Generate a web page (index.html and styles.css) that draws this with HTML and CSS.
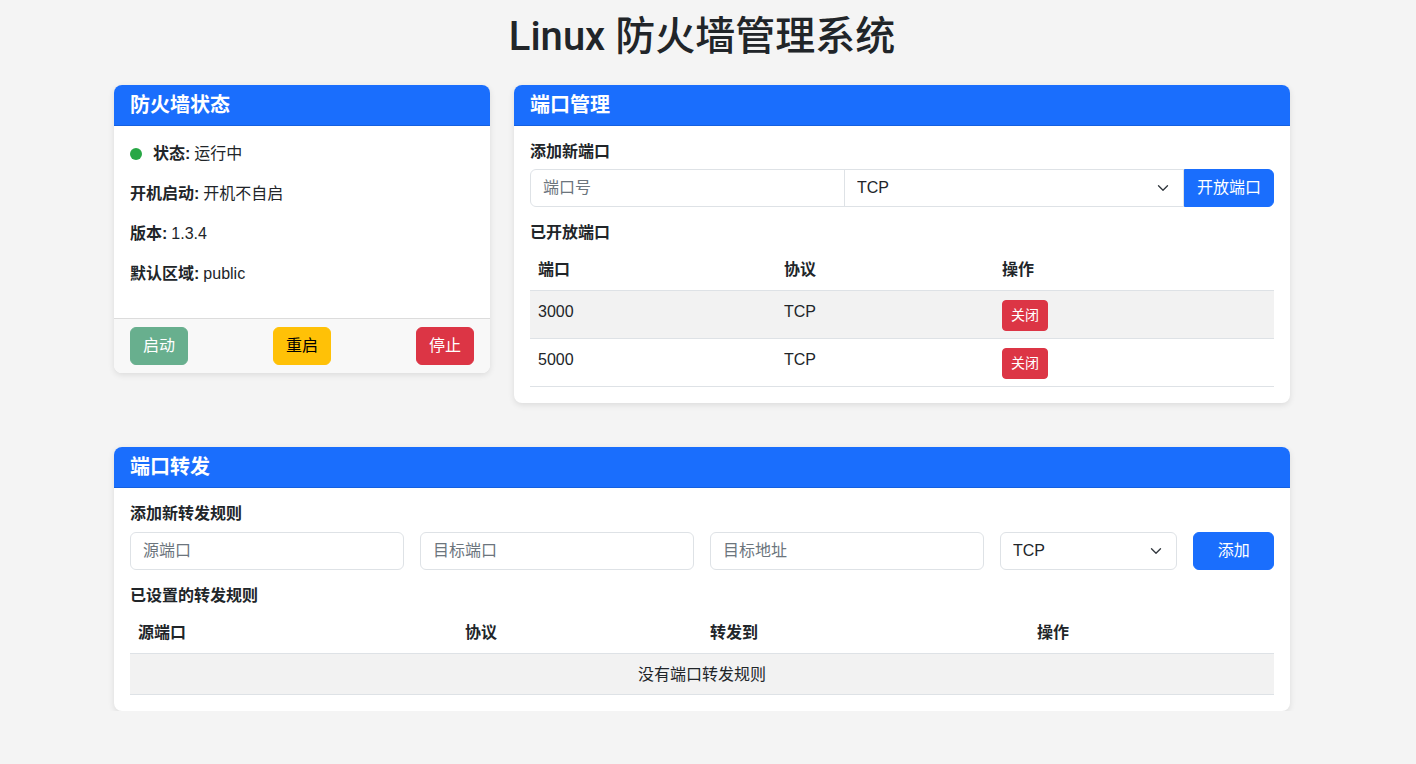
FILE: index.html
```html
<!DOCTYPE html>
<html lang="zh-CN">
<head>
<meta charset="utf-8">
<title>Linux 防火墙管理系统</title>
<link rel="stylesheet" href="styles.css">
</head>
<body>
<div class="container">
  <h1 class="page-title">Linux 防火墙管理系统</h1>

  <div class="top-row">
    <div class="card">
      <div class="card-header">防火墙状态</div>
      <div class="card-body">
        <p class="info"><span class="dot"></span><b>状态:</b> 运行中</p>
        <p class="info"><b>开机启动:</b> 开机不自启</p>
        <p class="info"><b>版本:</b> 1.3.4</p>
        <p class="info"><b>默认区域:</b> public</p>
      </div>
      <div class="card-footer">
        <button class="btn btn-success-disabled">启动</button>
        <button class="btn btn-warning">重启</button>
        <button class="btn btn-danger">停止</button>
      </div>
    </div>

    <div class="card">
      <div class="card-header">端口管理</div>
      <div class="card-body">
        <h6 class="section-title">添加新端口</h6>
        <div class="input-group">
          <input class="form-control ig-input" type="text" placeholder="端口号">
          <div class="select-wrap ig-select">
            <select class="form-select"><option>TCP</option><option>UDP</option></select>
            <svg class="chev" width="12" height="12" viewBox="0 0 16 16"><path d="M2 5l6 6 6-6" fill="none" stroke="#343a40" stroke-width="1.8" stroke-linecap="round" stroke-linejoin="round"/></svg>
          </div>
          <button class="btn btn-primary ig-btn">开放端口</button>
        </div>
        <h6 class="section-title gap-top">已开放端口</h6>
        <table class="table ports">
          <colgroup><col class="c1"><col class="c2"><col></colgroup>
          <thead><tr><th>端口</th><th>协议</th><th>操作</th></tr></thead>
          <tbody>
            <tr class="striped"><td>3000</td><td>TCP</td><td><button class="btn btn-sm btn-danger">关闭</button></td></tr>
            <tr><td>5000</td><td>TCP</td><td><button class="btn btn-sm btn-danger">关闭</button></td></tr>
          </tbody>
        </table>
      </div>
    </div>
  </div>

  <div class="card forward-card">
    <div class="card-header">端口转发</div>
    <div class="card-body">
      <h6 class="section-title">添加新转发规则</h6>
      <div class="fwd-form">
        <input class="form-control span3" type="text" placeholder="源端口">
        <input class="form-control span3" type="text" placeholder="目标端口">
        <input class="form-control span3" type="text" placeholder="目标地址">
        <div class="select-wrap span2">
          <select class="form-select full"><option>TCP</option><option>UDP</option></select>
          <svg class="chev" width="12" height="12" viewBox="0 0 16 16"><path d="M2 5l6 6 6-6" fill="none" stroke="#343a40" stroke-width="1.8" stroke-linecap="round" stroke-linejoin="round"/></svg>
        </div>
        <button class="btn btn-primary span1 rounded">添加</button>
      </div>
      <h6 class="section-title gap-top">已设置的转发规则</h6>
      <table class="table fwd">
        <colgroup><col class="f1"><col class="f2"><col class="f3"><col></colgroup>
        <thead><tr><th>源端口</th><th>协议</th><th>转发到</th><th>操作</th></tr></thead>
        <tbody>
          <tr class="striped"><td colspan="4" class="empty">没有端口转发规则</td></tr>
        </tbody>
      </table>
    </div>
  </div>
</div>
</body>
</html>
```

FILE: styles.css
```css
* { box-sizing: border-box; }

html, body {
  margin: 0;
  padding: 0;
}

body {
  background: #f4f4f4;
  color: #212529;
  font-family: "Liberation Sans", "Noto Sans CJK SC", sans-serif;
  font-size: 16px;
  line-height: 24px;
  padding-right: 12px;
}

.container {
  width: 1176px;
  margin: 0 auto;
}

.page-title {
  margin: 0 0 24px;
  padding-top: 13px;
  font-family: "Roboto", "Noto Sans CJK SC", sans-serif;
  font-size: 40px;
  line-height: 48px;
  font-weight: 500;
  text-align: center;
  color: #212529;
}

.top-row {
  display: grid;
  grid-template-columns: 376px 776px;
  gap: 24px;
  align-items: start;
}

.card {
  background: #fff;
  border-radius: 8px;
  box-shadow: 0 2px 6px rgba(0, 0, 0, 0.1);
  overflow: hidden;
}

.forward-card {
  margin-top: 44px;
}

.card-header {
  background: #1a6efd;
  color: #fff;
  font-size: 20px;
  font-weight: 700;
  line-height: 24px;
  padding: 8px 16px;
  border-bottom: 1px solid #1560df;
}

.card-body {
  padding: 16px;
}

.info {
  margin: 0 0 16px;
  display: flex;
  align-items: center;
}

.info b {
  font-weight: 700;
  margin-right: 4px;
}

.dot {
  width: 12px;
  height: 12px;
  border-radius: 50%;
  background: #28a745;
  margin-right: 11px;
}

.card-footer {
  display: flex;
  justify-content: space-between;
  padding: 8px 16px;
  background: #f8f8f8;
  border-top: 1px solid #dcdcdc;
}

.btn {
  font-family: inherit;
  font-size: 16px;
  line-height: 24px;
  padding: 6px 12px;
  border: 1px solid transparent;
  border-radius: 6px;
  cursor: pointer;
}

.btn-success-disabled {
  background: #68af8e;
  border-color: #68af8e;
  color: #fff;
}

.btn-warning {
  background: #ffc107;
  border-color: #ffc107;
  color: #000;
}

.btn-danger {
  background: #dc3545;
  border-color: #dc3545;
  color: #fff;
}

.btn-primary {
  background: #1a6efd;
  border-color: #1a6efd;
  color: #fff;
}

.btn-sm {
  font-size: 14px;
  line-height: 21px;
  padding: 4px 8px;
  border-radius: 4px;
}

.section-title {
  margin: 0 0 8px;
  font-size: 16px;
  line-height: 19px;
  font-weight: 700;
}

.gap-top {
  margin-top: 16px;
}

.form-control,
.form-select {
  font-family: inherit;
  font-size: 16px;
  line-height: 24px;
  color: #212529;
  padding: 6px 12px;
  border: 1px solid #dee2e6;
  border-radius: 6px;
  background: #fff;
  height: 38px;
  outline: none;
}

.form-control::placeholder {
  color: #6c757d;
}

.form-select {
  appearance: none;
  -webkit-appearance: none;
  padding-right: 36px;
  width: 100%;
}

.select-wrap {
  position: relative;
}

.chev {
  position: absolute;
  right: 15px;
  top: 13px;
  pointer-events: none;
}

.input-group {
  display: flex;
}

.ig-input {
  flex: 1 1 315px;
  min-width: 0;
  border-radius: 6px 0 0 6px;
}

.ig-select {
  flex: 1 1 340px;
  margin-left: -1px;
}

.ig-select .form-select {
  border-radius: 0;
}

.ig-btn {
  flex: 0 0 auto;
  border-radius: 0 6px 6px 0;
}

.table {
  width: 100%;
  border-collapse: collapse;
  table-layout: fixed;
  margin: 0;
}

.table th,
.table td {
  text-align: left;
  padding: 8px;
  vertical-align: top;
  border-bottom: 1px solid #dee2e6;
}

.table td {
  padding-top: 9px;
  padding-bottom: 7px;
}

.table th {
  font-weight: 700;
}

.striped td {
  background: #f2f2f2;
}

.ports .c1 { width: 246px; }
.ports .c2 { width: 218px; }

.fwd .f1 { width: 327px; }
.fwd .f2 { width: 245px; }
.fwd .f3 { width: 327px; }

.table td.empty {
  text-align: center;
}

.fwd-form {
  display: grid;
  grid-template-columns: repeat(12, 1fr);
  gap: 16px;
  padding-top: 1px;
}

.span3 { grid-column: span 3; width: 100%; min-width: 0; }
.span2 { grid-column: span 2; }
.span1 { grid-column: span 1; width: 100%; }
.full { width: 100%; }
.rounded { border-radius: 6px; }
```
